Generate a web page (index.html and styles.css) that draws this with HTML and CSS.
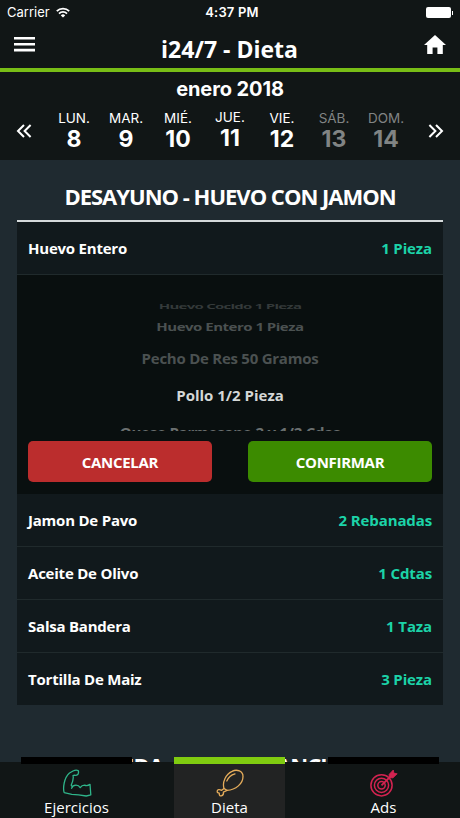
FILE: index.html
```html
<!DOCTYPE html>
<html lang="es">
  <head>
    <meta charset="UTF-8" />
    <meta name="viewport" content="width=device-width, initial-scale=1.0" />
    <title>i24/7 - Dieta</title>
    <link rel="stylesheet" href="styles.css">
  </head>
  <body>
    <!-- Status bar -->
    <div class="status">
      <div class="carrier">
        <span>Carrier</span>
        <svg width="14" height="11" viewBox="0 0 14 11">
          <g fill="none" stroke="#fff" stroke-width="1.8">
            <path d="M.8 4.1a8.8 8.8 0 0 1 12.4 0" />
            <path d="M3 6.6a5.7 5.7 0 0 1 8 0" />
          </g>
          <path d="M7 10.6 4.8 8.4a3.1 3.1 0 0 1 4.4 0z" fill="#fff" />
        </svg>
      </div>
      <div class="time">4:37 PM</div>
      <div class="battery"></div>
    </div>

    <!-- Header -->
    <header class="header">
      <svg width="21" height="15" viewBox="0 0 21 15" fill="#fff">
        <path d="M0 0h21v2.6H0zM0 5.9h21v2.6H0zM0 11.8h21v2.6H0z" />
      </svg>
      <h1>i24/7 - Dieta</h1>
      <svg width="22" height="19" viewBox="0 0 22 19" fill="#fff">
        <path d="M11 0 22 10.1h-3.2V19h-5.4v-6.4H8.6V19H3.2v-8.9H0z" />
      </svg>
    </header>

    <!-- Calendar -->
    <div class="calendar">
      <div class="month">enero 2018</div>
      <div class="week">
        <svg class="arrow" width="16" height="14" viewBox="0 0 16 14">
          <path d="M8 1 2 7l6 6M14.6 1l-6 6 6 6" />
        </svg>
        <div class="days">
          <div class="day"><span>LUN.</span><b>8</b></div>
          <div class="day"><span>MAR.</span><b>9</b></div>
          <div class="day"><span>MIÉ.</span><b>10</b></div>
          <div class="day today"><span>JUE.</span><b>11</b></div>
          <div class="day"><span>VIE.</span><b>12</b></div>
          <div class="day off"><span>SÁB.</span><b>13</b></div>
          <div class="day off"><span>DOM.</span><b>14</b></div>
        </div>
        <svg class="arrow" width="16" height="14" viewBox="0 0 16 14">
          <path d="m1.4 1 6 6-6 6M8 1l6 6-6 6" />
        </svg>
      </div>
    </div>

    <!-- Meals -->
    <main class="meals">
      <h2>DESAYUNO - HUEVO CON JAMON</h2>
      <div class="row"><span>Huevo Entero</span><span class="amount">1 Pieza</span></div>

      <div class="picker">
        <div class="wheel">
          <div class="edge"></div>
          <div class="option o1">Huevo Cocido 1 Pieza</div>
          <div class="option o2">Huevo Entero 1 Pieza</div>
          <div class="option o3">Pecho De Res 50 Gramos</div>
          <div class="option o4">Pollo 1/2 Pieza</div>
          <div class="option o5">Queso Parmesano 2 y 1/2 Cdas</div>
        </div>
        <div class="buttons">
          <button class="cancel">CANCELAR</button>
          <button class="confirm">CONFIRMAR</button>
        </div>
      </div>

      <div class="row"><span>Jamon De Pavo</span><span class="amount">2 Rebanadas</span></div>
      <div class="row"><span>Aceite De Olivo</span><span class="amount">1 Cdtas</span></div>
      <div class="row"><span>Salsa Bandera</span><span class="amount">1 Taza</span></div>
      <div class="row last"><span>Tortilla De Maiz</span><span class="amount">3 Pieza</span></div>

      <h2 class="next">COMIDA - POLLO PLANCHADO</h2>
    </main>

    <!-- Tabs -->
    <nav class="tabs">
      <div class="tab">
        <svg width="30" height="28" viewBox="0 0 30 28" fill="none" stroke="#2fb58a" stroke-width="1.3" stroke-linejoin="round" stroke-linecap="round">
          <path d="M7.5 4 11 2q3-1.4 5.2-.4.8 1.6-.2 3.6-1.3 1.4-3.6 1L11 6.6q1 3.4-1.8 9.6 1.6 1.4.4 3 1-3 4.4-3 2.8 0 4.2 2.4 1.6-2.4 4.4-2.4 2.6 1.2 5.4-.8l.8 10.4-4.6 1.2q-8-1.7-14.4-1.7L2.2 23.6Q1 20 2.2 14 3.6 7.4 7.5 4z" />
        </svg>
        <span>Ejercicios</span>
      </div>
      <div class="tab active">
        <svg width="30" height="28" viewBox="0 0 30 28" fill="none" stroke="#e5ac5b" stroke-width="1.3" stroke-linejoin="round" stroke-linecap="round">
          <path d="M9 19.5C7 13 11 5 17 2.3c5-2.4 11-.3 11 5.2 0 7-7 13.4-16 13.9" />
          <path d="m9 19.5-2.3 1.8Q3 19.5 2.2 22q-.3 2 2.1 2.2Q4 27 6.3 26.9 9 26.2 8.4 23.1L12 21.4z" />
          <path d="M11.8 12Q14 6.4 20 4.8" />
        </svg>
        <span>Dieta</span>
      </div>
      <div class="tab">
        <svg width="30" height="28" viewBox="0 0 30 28" fill="none" stroke="#d32350" stroke-width="1.5">
          <circle cx="12.5" cy="16.3" r="10.6" />
          <circle cx="12.5" cy="16.3" r="7.1" />
          <circle cx="12.5" cy="16.3" r="3.7" />
          <path d="M12.5 16.3 23 6" stroke-width="1.8" />
          <path d="M20.2 8.6V5.3L24.3 1l.5 3.1 3.4.7-4.3 4.1z" fill="#d32350" stroke-width=".8" />
        </svg>
        <span>Ads</span>
      </div>
    </nav>
  </body>
</html>
```
FILE: styles.css
```css
* {
  margin: 0;
  padding: 0;
  box-sizing: border-box;
}

body {
  width: 460px;
  height: 818px;
  overflow: hidden;
  display: flex;
  flex-direction: column;
  background: #1f2a30;
  color: #fff;
  font-family: "Open Sans", "Noto Sans", sans-serif;
}

svg {
  display: block;
}

/* Status bar */
.status {
  height: 24px;
  display: grid;
  grid-template-columns: 1fr auto 1fr;
  align-items: center;
  padding: 0 9px 0 7px;
  background: #111616;
  font-family: Inter, sans-serif;
  font-size: 13px;
}

.carrier {
  display: flex;
  align-items: center;
  gap: 6px;
}

.time {
  padding-left: 6px;
  font-weight: 600;
  letter-spacing: .2px;
}

.battery {
  justify-self: end;
  position: relative;
  width: 25px;
  height: 11px;
  border-radius: 2px;
  background: #fff;
}

.battery::after {
  content: "";
  position: absolute;
  right: -2px;
  top: 4px;
  width: 1px;
  height: 4px;
  background: #fff;
}

/* Header */
.header {
  height: 48px;
  display: flex;
  justify-content: space-between;
  align-items: center;
  padding: 0 14px 3px 14px;
  background: #111616;
  border-bottom: 4px solid #78bd16;
}

.header h1 {
  font-size: 23px;
  font-weight: 700;
  line-height: 30px;
  padding-top: 8px;
}

/* Calendar */
.calendar {
  height: 88px;
  background: #111616;
  font-family: Inter, sans-serif;
}

.month {
  padding-top: 5px;
  text-align: center;
  font-size: 20px;
  line-height: 24px;
  font-weight: 700;
  letter-spacing: -.1px;
}

.week {
  display: flex;
  justify-content: space-between;
  align-items: center;
  padding: 8px 16px 0;
}

.arrow {
  fill: none;
  stroke: #fff;
  stroke-width: 2;
}

.days {
  display: flex;
}

.day {
  width: 52px;
  display: flex;
  flex-direction: column;
  align-items: center;
}

.day span {
  font-size: 13.5px;
  line-height: 18px;
}

.day b {
  font-size: 23px;
  line-height: 25px;
}

.today {
  margin-top: -1px;
}

.off {
  color: #818484;
}

/* Meals */
.meals {
  flex: 1;
  min-height: 0;
  padding: 0 17px;
}

h2 {
  height: 62px;
  padding-top: 21px;
  border-bottom: 2px solid #d5dadb;
  text-align: center;
  font-size: 22px;
  line-height: 30px;
  font-weight: 700;
  letter-spacing: -1px;
  white-space: nowrap;
}

.row {
  height: 53px;
  display: flex;
  justify-content: space-between;
  align-items: center;
  padding: 0 11px;
  background: #11191c;
  border-bottom: 1px solid #202a2c;
  font-size: 15px;
  font-weight: 700;
  letter-spacing: -.22px;
}

.amount {
  color: #1cd3a8;
  letter-spacing: -.12px;
}

.last {
  height: 52px;
  border-bottom: 0;
}

/* Picker */
.picker {
  height: 219px;
  padding: 21px 11px 0;
  background: #090f0f;
}

.wheel {
  height: 135px;
  overflow: hidden;
  display: flex;
  flex-direction: column;
  align-items: center;
}

.edge {
  width: 190px;
  height: 1px;
  background: #151b1b;
}

.option {
  font-size: 15px;
  font-weight: 700;
  white-space: nowrap;
  line-height: 20px;
  letter-spacing: -.25px;
  color: #4b5151;
}

.o1 {
  height: 20px;
  letter-spacing: -.75px;
  transform: scaleY(.45);
  color: #343a3a;
}

.o2 {
  height: 22px;
  letter-spacing: -.5px;
  transform: scaleY(.75);
}

.o3 {
  margin-top: 12px;
}

.o4 {
  margin-top: 17px;
  letter-spacing: 0;
  color: #d4d7d7;
}

.o5 {
  margin-top: 17px;
  color: #6b7070;
}

.buttons {
  display: flex;
  justify-content: space-between;
  margin-top: 10px;
}

.buttons button {
  width: 184px;
  height: 41px;
  border: 0;
  border-radius: 5px;
  color: #fff;
  font: 700 15px "Open Sans", sans-serif;
  letter-spacing: -.3px;
}

.buttons .cancel {
  background: #bb2d2d;
}

.buttons .confirm {
  background: #3c8b00;
}

.next {
  margin-top: 24px;
}

/* Tabs */
.tabs {
  position: absolute;
  top: 762px;
  left: 0;
  width: 460px;
  height: 56px;
  display: flex;
  justify-content: space-between;
  padding: 0 21px;
  background: #111616;
}

.tab {
  width: 111px;
  height: 61px;
  margin-top: -5px;
  padding-top: 5px;
  border-top: 7px solid #000;
  display: flex;
  flex-direction: column;
  align-items: center;
  font-size: 15px;
  line-height: 21px;
}

.active {
  margin-right: 1px;
  background: #222323;
  border-color: #80cb10;
}
```
